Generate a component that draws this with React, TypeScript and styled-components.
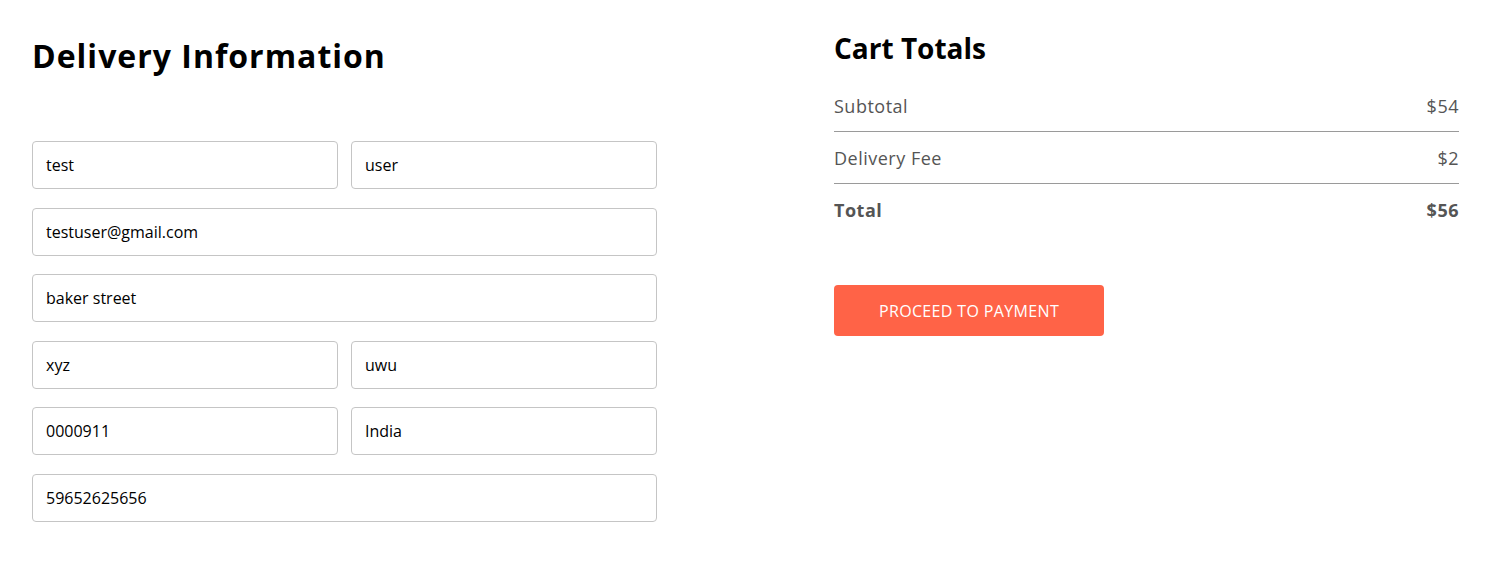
import React from "react";
import styled, { createGlobalStyle } from "styled-components";

const Global = createGlobalStyle`
  * { box-sizing: border-box; }
  body {
    margin: 0;
    background: #ffffff;
    font-family: "Open Sans", Lato, sans-serif;
  }
`;

const Page = styled.form`
  display: flex;
  justify-content: space-between;
  align-items: flex-start;
  padding: 0 27px 0 32px;
`;

const Left = styled.div`
  width: 625px;
  display: flex;
  flex-direction: column;
`;

const Title = styled.h1`
  margin: 38px 0 67px;
  font-size: 32px;
  line-height: 36px;
  font-weight: 700;
  letter-spacing: 1px;
  color: #000;
`;

const Fields = styled.div`
  display: flex;
  flex-direction: column;
  gap: 18.6px;
`;

const MultiFields = styled.div`
  display: flex;
  gap: 13px;
`;

const Input = styled.input`
  width: 100%;
  height: 48px;
  padding: 0 13px;
  border: 1px solid #c5c5c5;
  border-radius: 4px;
  font-family: inherit;
  font-size: 16px;
  color: #000;
  background: #fff;
  outline-color: tomato;
`;

const Right = styled.div`
  width: 625px;
  display: flex;
  flex-direction: column;
`;

const CartTitle = styled.h2`
  margin: 31px 0 29px;
  font-size: 28px;
  line-height: 34px;
  font-weight: 700;
  color: #000;
`;

const Detail = styled.div<{ $bold?: boolean }>`
  display: flex;
  justify-content: space-between;
  font-size: 18px;
  line-height: 24px;
  letter-spacing: 0.5px;
  color: #555;
  font-weight: ${(p) => (p.$bold ? 700 : 400)};
`;

const Rule = styled.hr`
  margin: 13px 0 14px;
  border: none;
  border-top: 1px solid #9a9a9a;
  height: 0;
`;

const PayButton = styled.button`
  margin-top: 63px;
  width: 270px;
  height: 51px;
  border: none;
  border-radius: 4px;
  background: #ff6347;
  color: #fff;
  font-family: inherit;
  font-size: 16px;
  font-weight: 500;
  letter-spacing: 0.35px;
  cursor: pointer;
`;

export default function App() {
  return (
    <>
      <Global />
      <Page onSubmit={(e) => e.preventDefault()}>
        <Left>
          <Title>Delivery Information</Title>
          <Fields>
            <MultiFields>
              <Input defaultValue="test" />
              <Input defaultValue="user" />
            </MultiFields>
            <Input defaultValue="testuser@gmail.com" />
            <Input defaultValue="baker street" />
            <MultiFields>
              <Input defaultValue="xyz" />
              <Input defaultValue="uwu" />
            </MultiFields>
            <MultiFields>
              <Input defaultValue="0000911" />
              <Input defaultValue="India" />
            </MultiFields>
            <Input defaultValue="59652625656" />
          </Fields>
        </Left>
        <Right>
          <CartTitle>Cart Totals</CartTitle>
          <Detail>
            <span>Subtotal</span>
            <span>$54</span>
          </Detail>
          <Rule />
          <Detail>
            <span>Delivery Fee</span>
            <span>$2</span>
          </Detail>
          <Rule />
          <Detail $bold>
            <span>Total</span>
            <span>$56</span>
          </Detail>
          <div>
            <PayButton type="submit">PROCEED TO PAYMENT</PayButton>
          </div>
        </Right>
      </Page>
    </>
  );
}
